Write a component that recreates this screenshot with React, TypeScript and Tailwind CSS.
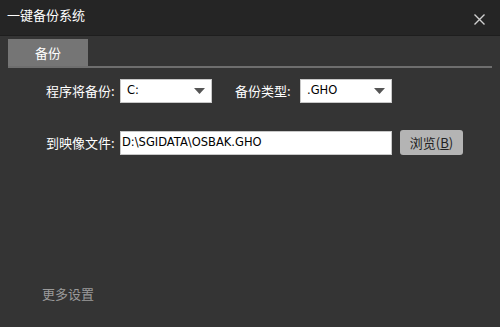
import React from "react";

const cjk = { fontFamily: '"Noto Sans CJK SC", "Noto Sans", sans-serif' };
const latin = { fontFamily: '"DejaVu Sans", "Noto Sans CJK SC", sans-serif' };

function Arrow() {
  return (
    <svg width="11" height="6" viewBox="0 0 11 6" className="shrink-0">
      <polygon points="0,0 11,0 5.5,6" fill="#555" />
    </svg>
  );
}

function Select({ value }: { value: string }) {
  return (
    <div className="flex h-[24px] w-[92px] items-center justify-between border border-[#c8c8c8] bg-white pl-[6px] pr-[6px]">
      <span className="text-[11.5px] leading-none text-black" style={latin}>{value}</span>
      <Arrow />
    </div>
  );
}

export default function App() {
  return (
    <div className="flex h-[327px] w-[500px] flex-col bg-[#343434]" style={cjk}>
      <div className="flex h-[36px] shrink-0 items-start justify-between border-b border-[#1e1e1e] bg-[#252525] pl-[7px] pr-[15px]">
        <span className="mt-[5px] text-[13px] leading-[20px] text-white">一键备份系统</span>
        <svg width="11" height="11" viewBox="0 0 11 11" className="mt-[14px]">
          <path d="M0.5 0.5 L10.5 10.5 M10.5 0.5 L0.5 10.5" stroke="#d0d0d0" strokeWidth="1.4" />
        </svg>
      </div>
      <div className="mx-[8px] mt-[3px] flex flex-col">
        <div className="flex h-[27px] w-[80px] items-center justify-center bg-[#757575] text-[13px] text-white">
          备份
        </div>
        <div className="h-[2px] bg-[#6e6e6e]" />
      </div>
      <div className="mt-[11px] flex items-center pl-[46px]">
        <span className="w-[74px] text-[13px] text-white">程序将备份:</span>
        <Select value="C:" />
        <span className="ml-[23px] w-[65px] text-[13px] text-white">备份类型:</span>
        <Select value=".GHO" />
      </div>
      <div className="mt-[27px] flex items-center pl-[46px]">
        <span className="w-[74px] text-[13px] text-white">到映像文件:</span>
        <div className="flex h-[24px] w-[272px] items-center border border-[#c8c8c8] bg-white pl-[1px]">
          <span className="text-[11.5px] leading-none text-black" style={latin}>D:\SGIDATA\OSBAK.GHO</span>
        </div>
        <div className="ml-[8px] flex h-[25px] w-[63px] items-center justify-center rounded-[3px] bg-[#b4b4b4] text-[13px] text-[#222]">
          浏览(<span className="underline">B</span>)
        </div>
      </div>
      <div className="mt-auto mb-[24px] pl-[42px] text-[13px] text-[#9a9a9a]">更多设置</div>
    </div>
  );
}
